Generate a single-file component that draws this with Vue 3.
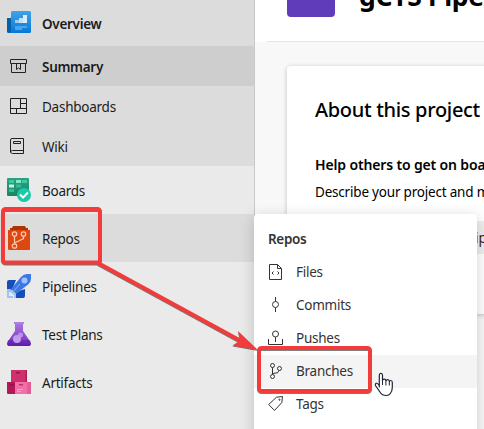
<script setup>
const services = [
  { id: 'boards', label: 'Boards' },
  { id: 'repos', label: 'Repos', active: true },
  { id: 'pipelines', label: 'Pipelines' },
  { id: 'tests', label: 'Test Plans' },
  { id: 'artifacts', label: 'Artifacts' },
]
const pages = [
  { id: 'summary', label: 'Summary', active: true },
  { id: 'dashboards', label: 'Dashboards' },
  { id: 'wiki', label: 'Wiki' },
]
const repoLinks = [
  { id: 'files', label: 'Files' },
  { id: 'commits', label: 'Commits' },
  { id: 'pushes', label: 'Pushes' },
  { id: 'branches', label: 'Branches', hover: true },
  { id: 'tags', label: 'Tags' },
]
</script>

<template>
  <div class="screen">
    <nav class="sidebar">
      <div class="group">
        <div class="row overview">
          <svg class="icon" viewBox="0 0 24 24">
            <defs>
              <linearGradient id="ov" x1="0" y1="0" x2="0" y2="1"><stop offset="0" stop-color="#43a2e9" /><stop offset="1" stop-color="#0778d4" /></linearGradient>
            </defs>
            <path d="M0 7h5v15H1.500Q0 22 0 20.500z" fill="#075fab" />
            <path d="M5.500 0H22.500Q24 0 24 1.500V20.500Q24 22 22.500 22H2.500Q4 21.500 4 19V1.500Q4 0 5.500 0z" fill="url(#ov)" />
            <path d="M8 9h4V7h4V4h4v8H8z" fill="#d7edff" />
            <path d="M8 9h4v3H8z" fill="#9bcdf5" /><path d="M12 7h4v5h-4z" fill="#c0e0fa" />
            <path d="M8 15h12v2H8zM8 17h7v2H8z" fill="#4ba5ea" />
          </svg>
          <span class="label strong">Overview</span>
        </div>
        <div v-for="p in pages" :key="p.id" class="row page" :class="{ selected: p.active }">
          <svg class="icon line" viewBox="0 0 24 24">
            <g v-if="p.id === 'summary'"><path d="M3.500 5.500h16v4h-16zM4.500 9.500v9h14v-9M9.500 10v5.500l2-1.500 2 1.500V10" /></g>
            <g v-else-if="p.id === 'dashboards'"><path d="M3.500 4.500h16v15h-16zM3.500 14.500h16M13.500 4.500v10M13.500 9.500h6M9.500 14.500v5" /></g>
            <g v-else><path d="M16.500 16.500h-11a2 2 0 0 0-2 1.500V6a1.500 1.500 0 0 1 1.500-1.500h11.500v15H5.500a2 2 0 0 1-2-1.500M6.500 7.500h7v2h-7z" /></g>
          </svg>
          <span class="label" :class="{ strong: p.active }">{{ p.label }}</span>
        </div>
      </div>
      <div v-for="s in services" :key="s.id" class="row service" :class="{ current: s.active }">
        <svg class="icon" viewBox="0 0 24 24">
          <g v-if="s.id === 'boards'">
            <defs><linearGradient id="board" x1="0" y1="0" x2="0" y2="1"><stop offset="0" stop-color="#2ba383" /><stop offset="1" stop-color="#178765" /></linearGradient></defs>
            <path d="M0 1Q0 0 1 0h20q1 0 1 1v17H1q-1 0-1-1z" fill="url(#board)" />
            <path d="M2 2h5v3H2zM15 2h5v3h-5z" fill="#40c8a0" /><path d="M9 2h5v3H9z" fill="#80e8ca" /><path d="M2 6.500h5v3H2z" fill="#b8fae6" />
            <path d="M9 6.500h5v3H9zM2 11h5v3H2z" fill="#35bb94" />
            <circle cx="17" cy="17" r="7" fill="#19c9a8" /><path d="m13 16.500 3 3 5-5" fill="none" stroke="#fff" stroke-width="2" />
          </g>
          <g v-else-if="s.id === 'repos'">
            <path d="M5 2l1-2h12l1 2h2v4H3V2z" fill="#ad3304" /><path d="M1 4h22v19q0 1-1 1H2q-1 0-1-1z" fill="#dd4810" />
            <g fill="none" stroke="#ffc5ad" stroke-width="1.300"><circle cx="7.500" cy="8" r="2.200" /><circle cx="16.500" cy="8" r="2.200" /><circle cx="7.500" cy="20" r="2.200" /><path d="M7.500 10.200v7.600M16.500 10.200v2.500L7.500 17" /></g>
          </g>
          <g v-else-if="s.id === 'pipelines'">
            <path d="M0 8q0-2 2-2h7l-4 10H0zM18 15v7q0 2-2 2H9v-6z" fill="#164db9" />
            <path d="M4 15 14 3q2.500-3 6-3h4v5q0 3-3 5.500L9 20z" fill="#3c78e5" />
            <circle cx="17.500" cy="6.500" r="3" fill="#a0c2ff" /><path d="m6 18 7-8" stroke="#85acef" stroke-width="1" />
            <path d="M0 24v-6h2v4h4v2zM0 15h3.500L9 20.500V24H7v-3l-4-3H0z" fill="#a0c0f8" />
          </g>
          <g v-else-if="s.id === 'tests'">
            <defs><linearGradient id="flask" x1="0" y1="0" x2="0" y2="1"><stop offset="0" stop-color="#a976df" /><stop offset=".7" stop-color="#8642cb" /><stop offset="1" stop-color="#5d219f" /></linearGradient></defs>
            <path d="M8 1h8v8l7.500 11Q25 24 21 24H3q-4 0-2.500-4L8 9z" fill="url(#flask)" /><path d="M7 0h10v2H7z" fill="#b47ced" />
            <path d="M1 18h22l.5 3q0 3-2.500 3H3q-3 0-2.500-3z" fill="#5b1daf" opacity=".5" />
            <circle cx="10" cy="17" r="4" fill="#c49aea" /><circle cx="13.500" cy="13" r="2.500" fill="#c49aea" opacity=".85" />
          </g>
          <g v-else>
            <path d="M4 0h16v12H4z" fill="#cf316f" /><path d="M18.500 0H20v12h-1.500z" fill="#ae1d54" /><path d="M0 12h8v12H1q-1 0-1-1z" fill="#b3195a" /><path d="M8 12h16v11q0 1-1 1H8z" fill="#ef6fa7" />
            <path d="M9 2h4v1.500H9zM3 14h4v1.500H3z" fill="#981047" /><path d="M12 14h4v1.500h-4z" fill="#c52e70" /><path d="M10 19h6v1h-6zM10 21h4v1h-4z" fill="#ff9dc6" /><path d="M20 12h4v12h-4z" fill="#e65c95" />
          </g>
        </svg>
        <span class="label">{{ s.label }}</span>
      </div>
    </nav>

    <main class="content">
      <header class="project-header">
        <div class="avatar"></div>
        <h1>gCTS Pipel</h1>
      </header>
      <section class="card">
        <h2>About this project</h2>
        <h3>Help others to get on boa</h3>
        <p>Describe your project and m</p>
        <div class="chip">ip</div>
      </section>
    </main>

    <aside class="popup">
      <div class="popup-title">Repos</div>
      <div v-for="r in repoLinks" :key="r.id" class="link" :class="{ hovered: r.hover }">
        <svg class="link-icon" viewBox="0 0 16 16">
          <path v-if="r.id === 'files'" d="M1.500.5h8l4 4v11h-12zM9.500.5v4h4M5.500 7.500 4 9l1.500 1.500M9.500 7.500 11 9l-1.500 1.500" />
          <g v-else-if="r.id === 'commits'"><circle cx="7.500" cy="7.500" r="3" /><path d="M7.500 0v4.500M7.500 10.500V15" /></g>
          <g v-else-if="r.id === 'pushes'"><circle cx="7.500" cy="4" r="3" /><path d="M7.500 7v5M.5 9v5.500h14V9" /></g>
          <g v-else-if="r.id === 'branches'"><circle cx="4.500" cy="2.500" r="2" /><circle cx="11.500" cy="5.500" r="2" /><circle cx="4.500" cy="13.500" r="2" /><path d="M4.500 4.500v7M11 7.500l-1.500 2.300-5 .7" /></g>
          <g v-else><path d="M.7 8.500 8.500 1.200l6-.7-.7 6L6.500 14.500z" /><circle cx="11.500" cy="3.700" r=".6" /></g>
        </svg>
        <span>{{ r.label }}</span>
      </div>
    </aside>

    <svg class="annotations" viewBox="0 0 484 429">
      <g class="marks">
        <rect x="3" y="209" width="97" height="53.500" rx="2.500" />
        <path d="M98 263 240 340.500" />
        <rect x="259" y="348" width="111" height="43" rx="2.500" />
        <path class="head" d="M258 350 232.500 345.500 240 340.500 238 331z" />
      </g>
      <path class="cursor" transform="translate(-1.200 -.2)" d="M380.500 387V375.500q0-2 1.600-2t1.600 2v5.500q0-1.600 1.700-1.600t1.700 2q.2-1.500 1.800-1.500t1.700 2q.2-1.200 1.400-1.200 1.500 0 1.500 2v5q0 3.500-2 6-1.200 2-4 2-4.200 0-6-3l-4.500-6.500q-1-2 .5-2.700 1.300-.5 3 2.500z" />
      <path class="creases" d="M382.500 381v4M385.900 381.500v4M389.300 382v3.500" />
    </svg>
  </div>
</template>

<style>
body { margin: 0; overflow: hidden; }
</style>

<style scoped>
.screen {
  position: relative;
  display: flex;
  width: 484px;
  height: 429px;
  overflow: hidden;
  font-family: "Noto Sans", "Open Sans", sans-serif;
  font-size: 13.5px;
  color: #1b1b1b;
  white-space: nowrap;
}
.sidebar { box-sizing: border-box; flex: 0 0 255px; background: #eaeaea; border-right: 1px solid #c8c8c8; }
.group { background: #dcdcdc; }
.row { display: flex; align-items: center; gap: 11px; padding-left: 7px; }
.overview { height: 46px; }
.page { height: 40px; }
.service { height: 48px; }
.selected { background: #cecece; border-radius: 0 2px 2px 0; }
.current { background: #dcdcdc; }
.icon { flex: none; width: 24px; height: 24px; }
.line { fill: none; stroke: #202020; stroke-width: 1; }
.label { line-height: 20px; margin-top: 2px; letter-spacing: -0.25px; }
.strong { font-weight: 600; letter-spacing: -0.3px; }

.content { flex: none; width: 229px; background: #f8f8f8; }
.project-header { display: flex; box-sizing: border-box; height: 42px; padding-left: 32px; gap: 24px; background: #fff linear-gradient(#e5e5e5, #e5e5e5) 12px 41px / 217px 1px no-repeat; }
.avatar { width: 48px; height: 17px; flex: none; border-radius: 0 0 4px 4px; background: #603cba; }
h1 { margin: -22px 0 0; font-size: 26.5px; line-height: 36px; font-weight: 700; letter-spacing: -.3px; color: #000; }
.card { box-sizing: border-box; width: 240px; height: 248px; margin: 24px 0 0 32px; padding: 30px 0 0 28px; background: #fff; border-radius: 4px 0 0 4px; box-shadow: 0 1px 5px rgba(0, 0, 0, .22); color: #000; }
h2 { margin: 0; font-size: 20px; line-height: 28px; font-weight: 500; letter-spacing: -.32px; }
h3 { margin: 31px 0 0; font-size: 14px; line-height: 20px; font-weight: 600; letter-spacing: -.15px; }
p { margin: 7px 0 0; font-size: 13.5px; line-height: 20px; letter-spacing: -.2px; }
.chip { width: 70px; height: 33px; margin: 19px 0 0 120px; padding-left: 40px; background: #eee; line-height: 34px; color: #401d10; }

.popup { position: absolute; left: 254px; top: 214px; width: 223px; height: 240px; background: #fff; border-radius: 4px; box-shadow: 0 3px 15px rgba(0, 0, 0, .18); color: #333; }
.popup-title { height: 42px; box-sizing: border-box; padding: 15px 0 0 14px; line-height: 20px; font-weight: 600; letter-spacing: -.35px; }
.link { display: flex; align-items: center; height: 33px; padding-left: 14px; gap: 12px; letter-spacing: -.25px; }
.link span { line-height: 20px; margin-top: -1px; }
.hovered { background: #f4f4f4; }
.link-icon { width: 16px; height: 16px; margin-top: -1px; fill: none; stroke: #333; stroke-width: 1; overflow: visible; }
.annotations { position: absolute; left: 0; top: 0; width: 484px; height: 429px; pointer-events: none; }
.marks { fill: none; stroke: #f23c3c; stroke-width: 4; filter: drop-shadow(.5px 1px .7px rgba(0, 0, 0, .5)); }
.marks .head { fill: #f23c3c; stroke: none; }
.cursor { fill: #fff; stroke: #1f2230; stroke-width: 1.2; stroke-linejoin: round; }
.creases { stroke: #1f2230; stroke-width: 1; }
</style>
